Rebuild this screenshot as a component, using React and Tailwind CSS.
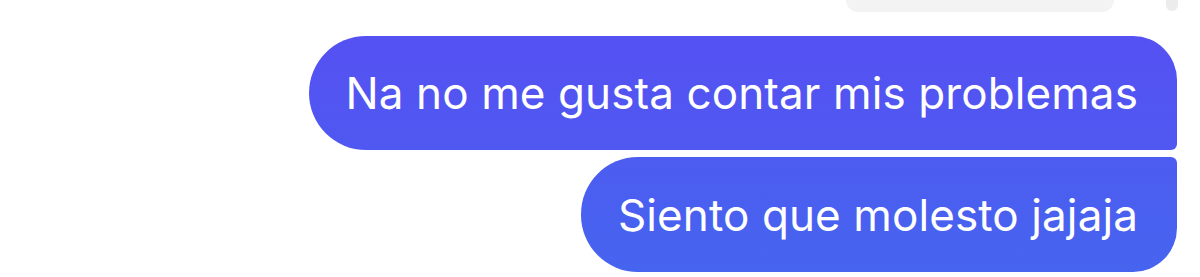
import React from 'react';

const messages = [
  {
    text: 'Na no me gusta contar mis problemas',
    shape: 'h-[114px] rounded-l-[57px] rounded-tr-[44px] rounded-br-[6px]',
    tone: 'from-[#5551f2] to-[#4f58f1]',
  },
  {
    text: 'Siento que molesto jajaja',
    shape: 'h-[115px] rounded-l-[57px] rounded-tr-[6px] rounded-br-[44px]',
    tone: 'from-[#4c5cf0] to-[#4664ef]',
  },
];

export default function App() {
  return (
    <div className="w-[1200px] h-[277px] bg-white overflow-hidden font-['Inter','Liberation_Sans',sans-serif]">
      {/* previous (cut-off) bubble + scroll thumb */}
      <div className="flex items-start justify-end h-[12px] pr-[22px]">
        <div className="w-[268px] h-[12px] bg-[#f3f3f3] rounded-b-[34px]" />
        <div className="w-[52px]" />
        <div className="w-[12px] h-[11px] bg-[#ececec] rounded-b-full" />
      </div>

      <div className="flex flex-col items-end gap-[7px] pt-[24px] pr-[23px]">
        {messages.map((m) => (
          <div
            key={m.text}
            className={`flex items-center pl-[37px] pr-[39px] bg-gradient-to-b text-white text-[44px] leading-none tracking-[0.1px] ${m.shape} ${m.tone}`}
          >
            {m.text}
          </div>
        ))}
      </div>
    </div>
  );
}
